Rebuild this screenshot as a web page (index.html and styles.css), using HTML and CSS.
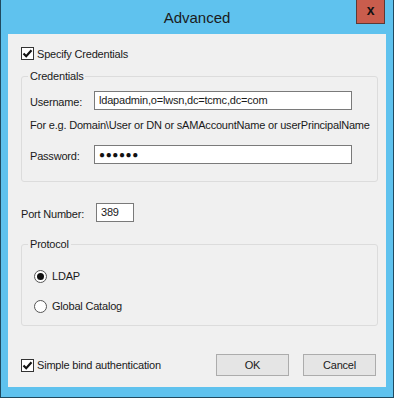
FILE: index.html
```html
<!DOCTYPE html>
<html lang="en">
<head>
    <meta charset="UTF-8">
    <title>Advanced</title>
    <link rel="stylesheet" href="styles.css">
</head>
<body>
    <div class="window">
        <div class="titlebar">
            <span class="title">Advanced</span>
            <span class="close-btn">x</span>
        </div>
        <div class="content">
            <div class="check-row">
                <span class="checkbox">
                    <svg width="11" height="11" viewBox="0 0 11 11"><path d="M1.5 5.5 L4.2 8.2 L9.5 2.2" fill="none" stroke="#111" stroke-width="2.2"/></svg>
                </span>
                <span>Specify Credentials</span>
            </div>

            <fieldset class="group group-cred">
                <legend>Credentials</legend>
                <div class="field-row">
                    <span class="field-label">Username:</span>
                    <div class="field wide">ldapadmin,o=lwsn,dc=tcmc,dc=com</div>
                </div>
                <div class="hint">For e.g. Domain\User or DN or sAMAccountName or userPrincipalName</div>
                <div class="field-row pass-row">
                    <span class="field-label">Password:</span>
                    <div class="field wide dots">&#9679;&#9679;&#9679;&#9679;&#9679;&#9679;</div>
                </div>
            </fieldset>

            <div class="field-row port-row">
                <span class="port-label">Port Number:</span>
                <div class="field port">389</div>
            </div>

            <fieldset class="group group-proto">
                <legend>Protocol</legend>
                <div class="radio-row">
                    <span class="radio checked"></span>
                    <span>LDAP</span>
                </div>
                <div class="radio-row second">
                    <span class="radio"></span>
                    <span>Global Catalog</span>
                </div>
            </fieldset>

            <div class="bottom-row">
                <div class="check-row">
                    <span class="checkbox">
                        <svg width="11" height="11" viewBox="0 0 11 11"><path d="M1.5 5.5 L4.2 8.2 L9.5 2.2" fill="none" stroke="#111" stroke-width="2.2"/></svg>
                    </span>
                    <span>Simple bind authentication</span>
                </div>
                <div class="buttons">
                    <button class="btn">OK</button>
                    <button class="btn">Cancel</button>
                </div>
            </div>
        </div>
    </div>
</body>
</html>
```

FILE: styles.css
```css
/* Fenetre de dialogue facon Windows 8 */
body {
    margin: 0;
    padding: 0;
    font-family: 'Liberation Sans', Arial, sans-serif;
    font-size: 11px;
    letter-spacing: -0.2px;
    color: #1a1a1a;
    background: #ffffff;
}

.window {
    width: 394px;
    height: 398px;
    box-sizing: border-box;
    background: #5fc2ee;
    border: 1px solid #1f4a60;
    border-top: none;
    padding: 0 7px 10px 7px;
    display: flex;
    flex-direction: column;
}

.titlebar {
    height: 34px;
    position: relative;
    display: flex;
    align-items: center;
    justify-content: center;
}

.title {
    font-size: 15px;
    letter-spacing: 0;
    color: #1b1b1b;
}

.close-btn {
    position: absolute;
    top: 0;
    right: 1px;
    width: 27px;
    height: 23px;
    background: #c95d4d;
    border: 1px solid #5b3a36;
    border-top: none;
    font-size: 14px;
    font-weight: bold;
    line-height: 20px;
    text-align: center;
    color: #111;
}

.content {
    flex: 1;
    background: #f0f0f0;
    padding: 13px 8px 0 13px;
    display: flex;
    flex-direction: column;
}

.check-row {
    display: flex;
    align-items: center;
    height: 13px;
    line-height: 14px;
}

.checkbox {
    width: 11px;
    height: 11px;
    border: 1px solid #333;
    background: #fff;
    margin-right: 3px;
    display: flex;
    align-items: center;
    justify-content: center;
}

/* Cadres de groupe */
.group {
    margin: 0;
    min-width: 0;
    border: 1px solid #dcdcdc;
    border-radius: 3px;
    padding: 0 8px 0 8px;
}

.group legend {
    padding: 0 2px;
    margin-left: -2px;
    line-height: 14px;
}

.group-cred {
    margin-top: 9px;
    padding-top: 8px;
    padding-bottom: 17px;
}

.group-proto {
    margin-top: 15px;
    padding-top: 18px;
    padding-bottom: 12px;
}

.field-row {
    display: flex;
    align-items: center;
}

.field-label {
    width: 64px;
    padding-top: 3px;
}

.field {
    height: 17px;
    border: 1px solid #7a7a7a;
    background: #fff;
    line-height: 17px;
    padding: 0 4px;
    box-sizing: content-box;
}

.wide {
    width: 248px;
}

.dots {
    font-size: 10px;
    letter-spacing: 0.6px;
    color: #111;
}

.hint {
    margin-top: 8px;
    line-height: 14px;
    white-space: nowrap;
}

.pass-row {
    margin-top: 13px;
}

.port-row {
    margin-top: 21px;
}

.port-label {
    width: 75px;
    padding-top: 3px;
}

.port {
    width: 28px;
}

.radio-row {
    display: flex;
    align-items: center;
    line-height: 14px;
    padding-left: 4px;
}

.radio-row.second {
    margin-top: 16px;
}

.radio {
    width: 11px;
    height: 11px;
    border: 1px solid #555;
    border-radius: 50%;
    background: #fff;
    margin-right: 5px;
    position: relative;
}

.radio.checked::after {
    content: '';
    position: absolute;
    top: 2px;
    left: 2px;
    width: 7px;
    height: 7px;
    border-radius: 50%;
    background: #111;
}

.bottom-row {
    margin-top: 28px;
    display: flex;
    align-items: center;
    justify-content: space-between;
    padding-right: 2px;
}

.buttons {
    display: flex;
    gap: 14px;
}

.btn {
    width: 73px;
    height: 22px;
    border: 1px solid #acacac;
    background: #e5e5e5;
    font-family: 'Liberation Sans', Arial, sans-serif;
    font-size: 11px;
    letter-spacing: -0.2px;
    color: #1a1a1a;
    padding: 0;
}
```
